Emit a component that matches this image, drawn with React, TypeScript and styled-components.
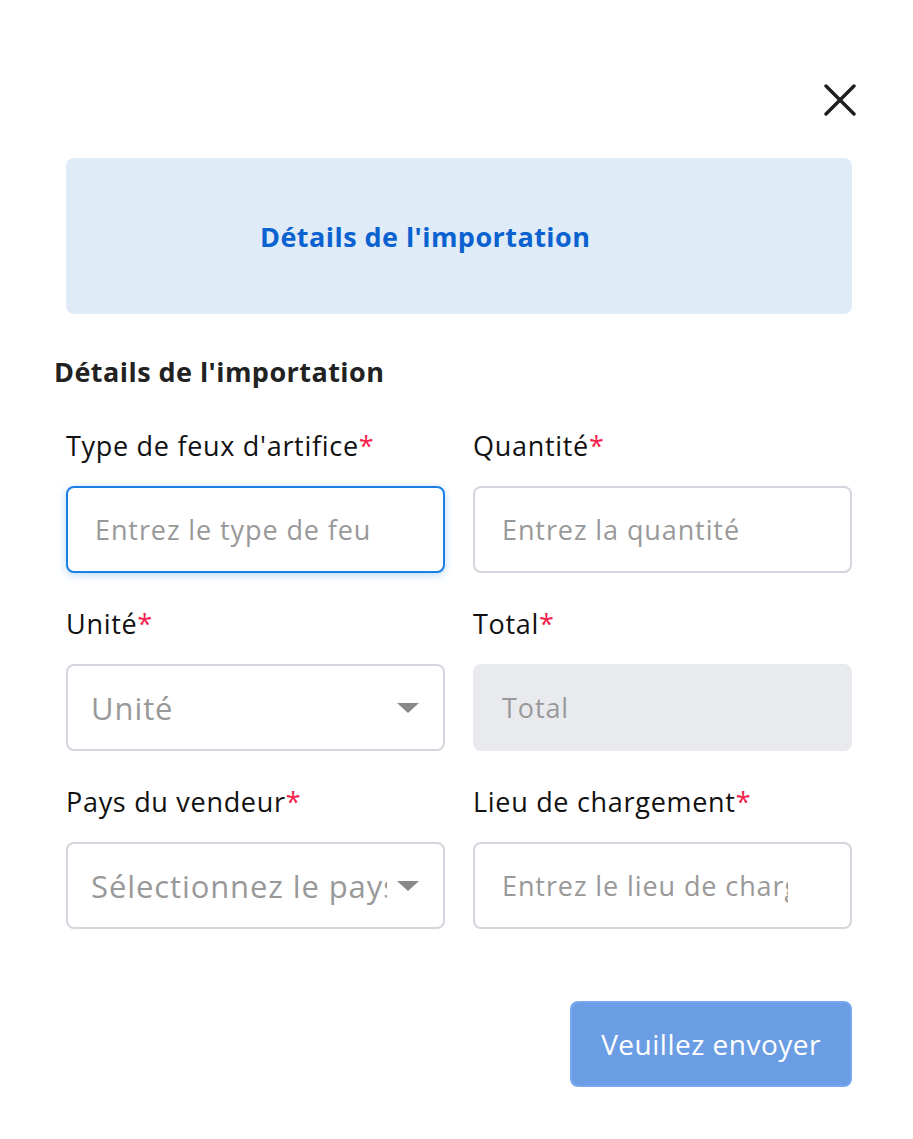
import React from 'react';
import styled, { createGlobalStyle } from 'styled-components';

const GlobalStyle = createGlobalStyle`
  body {
    margin: 0;
    padding: 0;
    background: #fff;
    font-family: "Open Sans", "Noto Sans", sans-serif;
  }
`;

const Modal = styled.div`
  width: 913px;
  box-sizing: border-box;
  padding: 84px 61px 0 66px;
`;

const CloseRow = styled.div`
  display: flex;
  justify-content: flex-end;
  margin-right: -4px;
  height: 32px;
`;

const CloseButton = styled.button`
  width: 32px;
  height: 32px;
  padding: 0;
  border: none;
  background: none;
  cursor: pointer;
`;

const Banner = styled.div`
  margin-top: 42px;
  height: 156px;
  background: #dfebf7;
  border-radius: 8px;
  display: flex;
  align-items: center;
  padding-left: 194px;
`;

const BannerTitle = styled.h2`
  margin: 0;
  font-size: 27px;
  letter-spacing: 0.45px;
  font-weight: 700;
  color: #0a62d0;
`;

const SectionTitle = styled.h3`
  margin: 40px 0 0 -12px;
  font-size: 27px;
  letter-spacing: 0.45px;
  line-height: 36px;
  font-weight: 700;
  color: #222;
`;

const FieldGrid = styled.div`
  margin-top: 38px;
  display: grid;
  grid-template-columns: 1fr 1fr;
  column-gap: 28px;
  row-gap: 33px;
`;

const Field = styled.div`
  display: flex;
  flex-direction: column;
`;

const Label = styled.label`
  font-size: 27px;
  letter-spacing: 0.7px;
  line-height: 36px;
  color: #111;
  margin-bottom: 22px;
`;

const Star = styled.span`
  color: #f5224d;
`;

const Box = styled.div<{ $focused?: boolean; $disabled?: boolean }>`
  position: relative;
  height: 87px;
  box-sizing: border-box;
  border-radius: 8px;
  border: 2px solid ${(p) => (p.$focused ? '#1a80e6' : p.$disabled ? '#e9eaee' : '#d3d6dc')};
  background: ${(p) => (p.$disabled ? '#e9eaee' : '#fff')};
  box-shadow: ${(p) => (p.$focused ? '0 2px 8px rgba(26,128,230,0.3)' : 'none')};
  display: flex;
  align-items: center;
  overflow: hidden;
`;

const Input = styled.input<{ $big?: boolean }>`
  width: 100%;
  height: 100%;
  border: none;
  outline: none;
  background: transparent;
  font-family: inherit;
  font-size: ${(p) => (p.$big ? '31px' : '27px')};
  letter-spacing: ${(p) => (p.$big ? '0.9px' : '0.9px')};
  padding: 0 ${(p) => (p.$big ? '56px' : '62px')} 0 ${(p) => (p.$big ? '23px' : '27px')};
  color: #333;
  &::placeholder {
    color: #999;
  }
`;

const Caret = styled.span`
  position: absolute;
  right: 24px;
  top: 50%;
  margin-top: -5px;
  width: 0;
  height: 0;
  border-left: 11px solid transparent;
  border-right: 11px solid transparent;
  border-top: 10px solid #888;
`;

const Footer = styled.div`
  display: flex;
  justify-content: flex-end;
  margin-top: 72px;
`;

const Submit = styled.button`
  height: 86px;
  padding: 0 29px;
  border-radius: 8px;
  border: 2px solid #76a9f0;
  background: #6a9de3;
  color: #fff;
  font-family: inherit;
  font-size: 28px;
  letter-spacing: 0.5px;
  cursor: pointer;
`;

type FieldDef = {
  label: string;
  placeholder: string;
  focused?: boolean;
  disabled?: boolean;
  select?: boolean;
};

const fields: FieldDef[] = [
  { label: "Type de feux d'artifice", placeholder: 'Entrez le type de feu', focused: true },
  { label: 'Quantité', placeholder: 'Entrez la quantité' },
  { label: 'Unité', placeholder: 'Unité', select: true },
  { label: 'Total', placeholder: 'Total', disabled: true },
  { label: 'Pays du vendeur', placeholder: 'Sélectionnez le pays', select: true },
  { label: 'Lieu de chargement', placeholder: 'Entrez le lieu de chargement' },
];

function App() {
  return (
    <>
      <GlobalStyle />
      <Modal>
        <CloseRow>
          <CloseButton aria-label="Fermer">
            <svg width="32" height="32" viewBox="0 0 32 32">
              <path d="M2 2 L30 30 M30 2 L2 30" stroke="#1f1f1f" strokeWidth="3.4" strokeLinecap="round" />
            </svg>
          </CloseButton>
        </CloseRow>
        <Banner>
          <BannerTitle>Détails de l'importation</BannerTitle>
        </Banner>
        <SectionTitle>Détails de l'importation</SectionTitle>
        <FieldGrid>
          {fields.map((f) => (
            <Field key={f.label}>
              <Label>
                {f.label}
                <Star>*</Star>
              </Label>
              <Box $focused={f.focused} $disabled={f.disabled}>
                <Input placeholder={f.placeholder} disabled={f.disabled} readOnly={f.select} $big={f.select} />
                {f.select && <Caret />}
              </Box>
            </Field>
          ))}
        </FieldGrid>
        <Footer>
          <Submit>Veuillez envoyer</Submit>
        </Footer>
      </Modal>
    </>
  );
}

export default App;
